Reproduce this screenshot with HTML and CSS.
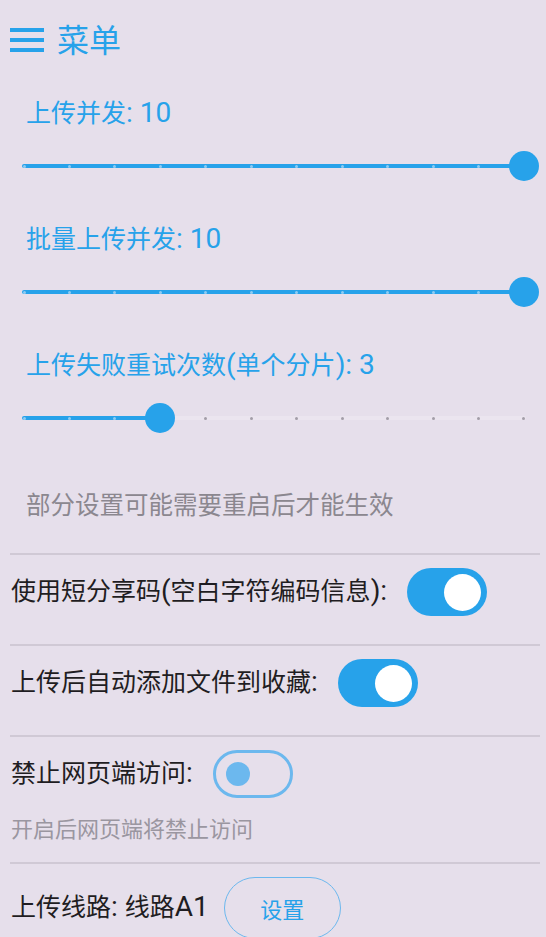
FILE: index.html
```html
<!DOCTYPE html>
<html lang="zh-CN">
<head>
<meta charset="utf-8">
<title>菜单</title>
<link rel="stylesheet" href="styles.css">
</head>
<body>
<header class="header">
  <svg class="menu-icon" width="34" height="24" viewBox="0 0 34 24" aria-hidden="true">
    <rect x="0" y="0" width="34" height="4" fill="#27a2ea"/>
    <rect x="0" y="10" width="34" height="4" fill="#27a2ea"/>
    <rect x="0" y="20" width="34" height="4" fill="#27a2ea"/>
  </svg>
  <h1 class="title">菜单</h1>
</header>

<section class="slider-block first">
  <div class="slider-label">上传并发<span class="lat">: 10</span></div>
  <div class="slider">
    <div class="rail"></div>
    <div class="fill" style="width:100%"></div>
    <div class="ticks">
      <i class="on"></i><i class="on"></i><i class="on"></i><i class="on"></i><i class="on"></i><i class="on"></i><i class="on"></i><i class="on"></i><i class="on"></i><i class="on"></i><i class="on"></i><i class="on"></i>
    </div>
    <div class="thumb" style="left:100%"></div>
  </div>
</section>

<section class="slider-block">
  <div class="slider-label">批量上传并发<span class="lat">: 10</span></div>
  <div class="slider">
    <div class="rail"></div>
    <div class="fill" style="width:100%"></div>
    <div class="ticks">
      <i class="on"></i><i class="on"></i><i class="on"></i><i class="on"></i><i class="on"></i><i class="on"></i><i class="on"></i><i class="on"></i><i class="on"></i><i class="on"></i><i class="on"></i><i class="on"></i>
    </div>
    <div class="thumb" style="left:100%"></div>
  </div>
</section>

<section class="slider-block">
  <div class="slider-label">上传失败重试次数<span class="lat">(</span>单个分片<span class="lat">): 3</span></div>
  <div class="slider">
    <div class="rail"></div>
    <div class="fill" style="width:27.27%"></div>
    <div class="ticks">
      <i class="on"></i><i class="on"></i><i class="on"></i><i class="on"></i><i></i><i></i><i></i><i></i><i></i><i></i><i></i><i></i>
    </div>
    <div class="thumb" style="left:27.27%"></div>
  </div>
</section>

<p class="restart-note">部分设置可能需要重启后才能生效</p>

<div class="divider"></div>

<div class="row">
  <span class="row-text">使用短分享码<span class="lat">(</span>空白字符编码信息<span class="lat">):</span></span>
  <span class="switch on"><span class="knob"></span></span>
</div>

<div class="divider"></div>

<div class="row">
  <span class="row-text">上传后自动添加文件到收藏<span class="lat">:</span></span>
  <span class="switch on"><span class="knob"></span></span>
</div>

<div class="divider"></div>

<div class="row with-note">
  <span class="row-text">禁止网页端访问<span class="lat">:</span></span>
  <span class="switch off"><span class="knob"></span></span>
</div>
<p class="small-note">开启后网页端将禁止访问</p>

<div class="divider"></div>

<div class="row last">
  <span class="row-text">上传线路<span class="lat">: </span>线路<span class="lat">A1</span></span>
  <button class="outline-btn">设置</button>
</div>
</body>
</html>
```

FILE: styles.css
```css
html, body {
  margin: 0;
  padding: 0;
}

body {
  background: #e6dfeb;
  font-family: Roboto, "Noto Sans CJK SC", sans-serif;
  width: 546px;
  height: 937px;
  overflow: hidden;
}

.lat {
  font-size: 1.12em;
  line-height: 1;
}

.header {
  display: flex;
  align-items: center;
  height: 40px;
  padding: 20px 0 0 10px;
}

.menu-icon {
  display: block;
  flex: none;
}

.title {
  margin: 0 0 0 13px;
  font-size: 32px;
  line-height: 40px;
  font-weight: 400;
  color: #27a2ea;
  position: relative;
  top: 1px;
}

.slider-block {
  margin-top: 44px;
}

.slider-block.first {
  margin-top: 39px;
}

.slider-label {
  margin-left: 26px;
  height: 30px;
  font-size: 25px;
  line-height: 30px;
  color: #27a2ea;
}

.slider {
  position: relative;
  width: 500px;
  height: 30px;
  margin: 22px 0 0 24px;
}

.rail {
  position: absolute;
  left: -2px;
  right: -2px;
  top: 13px;
  height: 4px;
  border-radius: 2px;
  background: #ebe5ef;
}

.fill {
  position: absolute;
  left: -2px;
  top: 13px;
  height: 4px;
  border-radius: 2px;
  background: #27a2ea;
}

.ticks {
  position: absolute;
  left: -1.5px;
  right: -1.5px;
  top: 13.5px;
  height: 3px;
  display: flex;
  justify-content: space-between;
}

.ticks i {
  display: block;
  width: 3px;
  height: 3px;
  border-radius: 50%;
  background: #a39ea8;
}

.ticks i.on {
  background: #8fccf3;
}

.thumb {
  position: absolute;
  top: 0;
  width: 30px;
  height: 30px;
  margin-left: -15px;
  border-radius: 50%;
  background: #27a2ea;
}

.restart-note {
  margin: 58px 0 0 26px;
  font-size: 24.5px;
  line-height: 30px;
  height: 30px;
  color: #8b878f;
}

.divider {
  height: 2px;
  margin: 0 6px 0 10px;
  background: #d0c9d5;
}

.restart-note + .divider {
  margin-top: 32px;
}

.row {
  display: flex;
  align-items: center;
  padding: 13px 0 28px 11px;
}

.row.with-note {
  padding-bottom: 0;
}

.row.last {
  padding-bottom: 0;
}

.row-text {
  height: 30px;
  font-size: 25px;
  line-height: 30px;
  color: #1f1d22;
}

.switch {
  position: relative;
  display: block;
  flex: none;
  box-sizing: border-box;
  width: 80px;
  height: 48px;
  margin-left: 20px;
  border-radius: 24px;
}

.switch.on {
  background: #27a2ea;
}

.switch.on .knob {
  position: absolute;
  right: 6px;
  top: 5.5px;
  width: 37px;
  height: 37px;
  border-radius: 50%;
  background: #ffffff;
}

.switch.off {
  border: 3px solid #6cb8ee;
}

.switch.off .knob {
  position: absolute;
  left: 10px;
  top: 9px;
  width: 24px;
  height: 24px;
  border-radius: 50%;
  background: #6cb8ee;
}

.small-note {
  margin: 18px 0 18px 11px;
  font-size: 22px;
  line-height: 28px;
  height: 28px;
  color: #9a96a0;
}

.outline-btn {
  flex: none;
  box-sizing: border-box;
  width: 117px;
  height: 62px;
  margin-left: 15px;
  padding: 0;
  border: 1.5px solid #6cb8ee;
  border-radius: 31px;
  background: transparent;
  font-family: Roboto, "Noto Sans CJK SC", sans-serif;
  font-size: 22px;
  color: #27a2ea;
}
```
